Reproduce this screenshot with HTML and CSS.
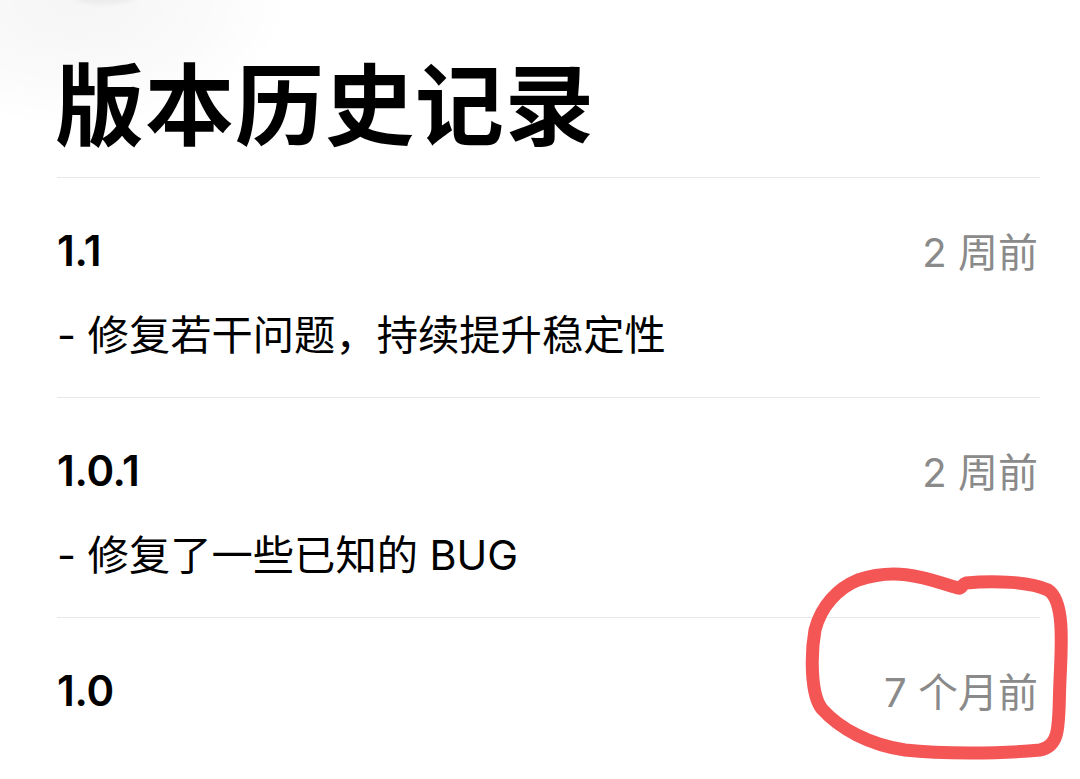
FILE: index.html
```html
<!DOCTYPE html>
<html lang="zh-CN">
<head>
<meta charset="utf-8">
<title>版本历史记录</title>
<link rel="stylesheet" href="styles.css">
</head>
<body>
<div class="page">
  <div class="shade"></div>
  <header class="header">
    <h1 class="title">版本历史记录</h1>
  </header>
  <section class="entry">
    <div class="entry-head">
      <span class="version">1.1</span>
      <span class="date">2 周前</span>
    </div>
    <p class="notes">- 修复若干问题，持续提升稳定性</p>
  </section>
  <section class="entry">
    <div class="entry-head">
      <span class="version">1.0.1</span>
      <span class="date">2 周前</span>
    </div>
    <p class="notes">- 修复了一些已知的 BUG</p>
  </section>
  <section class="entry last">
    <div class="entry-head">
      <span class="version">1.0</span>
      <span class="date">7 个月前</span>
    </div>
  </section>
  <svg class="markup" viewBox="0 0 1080 779" width="1080" height="779" aria-hidden="true">
    <path d="M 858 580 C 900 566, 930 580, 958 588 C 962 589, 962 584, 966 583 C 995 580, 1030 582, 1048 590 C 1064 600, 1062 640, 1060 680 C 1058 722, 1062 746, 1040 750 C 1000 754, 940 754, 905 750 C 870 745, 840 729, 822 709 C 810 694, 811 652, 815 630 C 821 606, 838 588, 858 580 Z" fill="none" stroke="#f45656" stroke-width="13" stroke-linejoin="round" stroke-linecap="round"/>
  </svg>
</div>
</body>
</html>
```

FILE: styles.css
```css
html, body {
  margin: 0;
  padding: 0;
  background: #ffffff;
}

.page {
  position: relative;
  width: 1080px;
  height: 779px;
  overflow: hidden;
  box-sizing: border-box;
  padding: 0 40px 0 57px;
  font-family: Inter, "Noto Sans CJK SC", "Noto Sans", sans-serif;
  color: #000000;
}

.shade {
  position: absolute;
  left: -60px;
  top: -80px;
  width: 340px;
  height: 200px;
  background: radial-gradient(ellipse at 40% 40%, rgba(0,0,0,0.04) 0%, rgba(0,0,0,0.018) 45%, rgba(0,0,0,0) 75%);
  pointer-events: none;
}

.shade::after {
  content: "";
  position: absolute;
  left: 135px;
  top: 70px;
  width: 60px;
  height: 14px;
  border-radius: 50%;
  background: rgba(0,0,0,0.045);
  filter: blur(2px);
}

.header {
  padding-top: 50px;
  padding-bottom: 27px;
  border-bottom: 1px solid #e8e8e8;
}

.title {
  margin: 0 0 0 -2px;
  font-family: "Noto Sans CJK SC", sans-serif;
  font-size: 89px;
  line-height: 100px;
  font-weight: 700;
  letter-spacing: 1px;
}

.entry {
  padding-top: 46px;
  padding-bottom: 36px;
  border-bottom: 1px solid #e8e8e8;
}

.entry.last {
  border-bottom: none;
}

.entry-head {
  display: flex;
  justify-content: space-between;
  align-items: center;
  height: 52px;
}

.version {
  font-size: 42px;
  font-weight: 600;
  letter-spacing: -0.3px;
}

.date {
  font-size: 40px;
  color: #8a8a8a;
  margin-right: 2px;
}

.notes {
  margin: 33px 0 0 0;
  font-size: 41.3px;
  line-height: 52px;
  color: #000000;
}

.markup {
  position: absolute;
  left: 0;
  top: 0;
  pointer-events: none;
}
```
